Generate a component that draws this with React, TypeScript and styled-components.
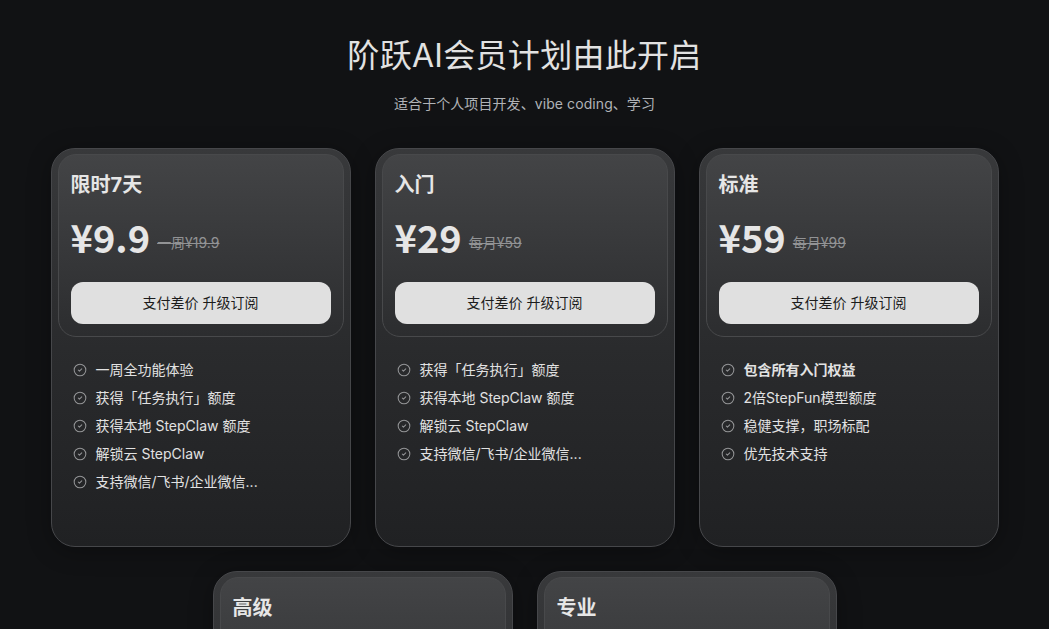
import React from 'react';
import styled, { createGlobalStyle } from 'styled-components';
import { CircleCheck } from 'lucide-react';

const GlobalStyle = createGlobalStyle`
  html, body {
    margin: 0;
    height: 100%;
    overflow: hidden;
    background: #111214;
  }
  body {
    font-family: Inter, "Noto Sans CJK SC", sans-serif;
    color: #e2e2e2;
  }
`;

const Page = styled.div`
  display: flex;
  flex-direction: column;
  align-items: center;
  padding-top: 32px;
`;

const Title = styled.h1`
  margin: 0;
  font-size: 32px;
  line-height: 48px;
  font-weight: 400;
  letter-spacing: 0.3px;
  color: #e2e2e2;
`;

const Subtitle = styled.p`
  margin: 13px 0 0;
  font-size: 14px;
  line-height: 22px;
  letter-spacing: 0.08px;
  color: #b0b3b7;
`;

const Plans = styled.div`
  display: flex;
  flex-wrap: wrap;
  justify-content: center;
  gap: 24px;
  width: 948px;
  margin-top: 33px;
`;

const Card = styled.section`
  box-sizing: border-box;
  width: 300px;
  height: 399px;
  padding: 5px 6px;
  border: 1px solid #46474a;
  border-radius: 24px;
  background: linear-gradient(180deg, #38393b 0%, #2a2b2d 50%, #202123 100%);
  box-shadow: 0 4px 24px rgba(0, 0, 0, 0.3);
`;

const Head = styled.div`
  box-sizing: border-box;
  height: 183px;
  padding: 12px;
  border: 1px solid #48494b;
  border-radius: 18px;
  background: linear-gradient(180deg, #434446 0%, #2c2d2f 100%);
`;

const PlanName = styled.h2`
  margin: 0;
  font-size: 20px;
  line-height: 36px;
  font-weight: 700;
  color: #e6e6e6;
`;

const PriceRow = styled.div`
  display: flex;
  align-items: center;
  gap: 7px;
  height: 50px;
  margin-top: 11px;
`;

const Price = styled.span`
  font-family: "Noto Sans CJK SC", sans-serif;
  font-size: 38px;
  line-height: 50px;
  font-weight: 700;
  margin-bottom: 4px;
  color: #e6e6e6;
`;

const OldPrice = styled.span`
  font-size: 14px;
  padding-top: 5px;
  color: #929395;
  text-decoration: line-through;
`;

const BuyButton = styled.button`
  display: block;
  width: 260px;
  height: 42px;
  margin-top: 18px;
  padding: 0 0 2px;
  border: 0;
  border-radius: 12px;
  background: #e0e0e0;
  color: #1c1c1c;
  font-family: inherit;
  font-size: 14px;
`;

const Features = styled.ul`
  list-style: none;
  display: flex;
  flex-direction: column;
  gap: 8px;
  margin: 0;
  padding: 23px 15px 0;
`;

const Feature = styled.li<{ $strong?: boolean }>`
  display: flex;
  align-items: center;
  gap: 9px;
  font-size: 14px;
  line-height: 20px;
  color: #e2e2e2;
  font-weight: ${p => (p.$strong ? 700 : 400)};
  svg {
    flex: none;
    color: #949597;
  }
`;

interface Plan {
  name: string;
  price?: string;
  oldPrice?: string;
  features?: { text: string; strong?: boolean }[];
}

const PLANS: Plan[] = [
  {
    name: '限时7天',
    price: '¥9.9',
    oldPrice: '一周¥19.9',
    features: [
      { text: '一周全功能体验' },
      { text: '获得「任务执行」额度' },
      { text: '获得本地 StepClaw 额度' },
      { text: '解锁云 StepClaw' },
      { text: '支持微信/飞书/企业微信...' },
    ],
  },
  {
    name: '入门',
    price: '¥29',
    oldPrice: '每月¥59',
    features: [
      { text: '获得「任务执行」额度' },
      { text: '获得本地 StepClaw 额度' },
      { text: '解锁云 StepClaw' },
      { text: '支持微信/飞书/企业微信...' },
    ],
  },
  {
    name: '标准',
    price: '¥59',
    oldPrice: '每月¥99',
    features: [
      { text: '包含所有入门权益', strong: true },
      { text: '2倍StepFun模型额度' },
      { text: '稳健支撑，职场标配' },
      { text: '优先技术支持' },
    ],
  },
  { name: '高级' },
  { name: '专业' },
];

const App = () => (
  <Page>
    <GlobalStyle />
    <Title>阶跃AI会员计划由此开启</Title>
    <Subtitle>适合于个人项目开发、vibe coding、学习</Subtitle>
    <Plans>
      {PLANS.map(plan => (
        <Card key={plan.name}>
          <Head>
            <PlanName>{plan.name}</PlanName>
            {plan.price && (
              <>
                <PriceRow>
                  <Price>{plan.price}</Price>
                  <OldPrice>{plan.oldPrice}</OldPrice>
                </PriceRow>
                <BuyButton>支付差价 升级订阅</BuyButton>
              </>
            )}
          </Head>
          {plan.features && (
            <Features>
              {plan.features.map(f => (
                <Feature key={f.text} $strong={f.strong}>
                  <CircleCheck size={14} strokeWidth={1.75} />
                  {f.text}
                </Feature>
              ))}
            </Features>
          )}
        </Card>
      ))}
    </Plans>
  </Page>
);

export default App;
